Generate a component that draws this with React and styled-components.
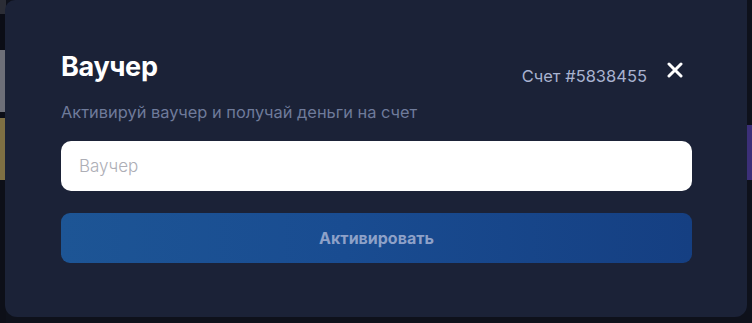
import React, { useState } from 'react';
import styled, { createGlobalStyle } from 'styled-components';

const GlobalStyle = createGlobalStyle`
  html, body {
    margin: 0;
    padding: 0;
    background-color: #0e111b;
    background-image:
      linear-gradient(to bottom, #2b2d36 0, #2b2d36 14px, #0b0d16 14px, #0b0d16 50px, #6d6f78 50px, #6d6f78 112px, #0c0e17 112px, #0c0e17 118px, #7e6f43 118px, #7e6f43 180px, #0d0f18 180px),
      linear-gradient(to bottom, #0e111b 0, #0e111b 125px, #3b2f78 125px, #3b2f78 180px, #0e111b 180px);
    background-size: 6px 100%, 6px 100%;
    background-position: left top, right top;
    background-repeat: no-repeat;
    font-family: Inter, "Noto Sans", "DejaVu Sans", sans-serif;
  }
`;

const Backdrop = styled.div`
  width: 752px;
  height: 323px;
  padding: 0 5px;
  box-sizing: border-box;
`;

const Modal = styled.div`
  height: 317px;
  box-sizing: border-box;
  padding: 51px 55px 54px 56px;
  background: #1b2237;
  border-radius: 10px 0 12px 12px;
  display: flex;
  flex-direction: column;

  & > * {
    flex-shrink: 0;
  }
`;

const Header = styled.div`
  height: 32px;
  display: flex;
  align-items: flex-start;
  justify-content: space-between;
`;

const Title = styled.h2`
  margin: 0;
  font-size: 27px;
  line-height: 32px;
  font-weight: 700;
  color: #ffffff;
  letter-spacing: -0.3px;
`;

const HeaderRight = styled.div`
  display: flex;
  align-items: flex-start;
  gap: 20px;
  margin-right: 9px;
`;

const Account = styled.span`
  margin-top: 15px;
  font-size: 16.5px;
  line-height: 20px;
  color: #a9b3d0;
`;

const CloseButton = styled.button`
  margin-top: 11px;
  width: 16px;
  height: 16px;
  padding: 0;
  border: 0;
  background: none;
  cursor: pointer;
  display: flex;
  svg { display: block; }
`;

const Subtitle = styled.p`
  margin: 19px 0 0;
  font-size: 16.4px;
  line-height: 20px;
  color: #6f7b9b;
`;

const Input = styled.input`
  margin-top: 19px;
  height: 50px;
  box-sizing: border-box;
  width: 100%;
  border: 0;
  border-radius: 10px;
  background: #ffffff;
  padding: 0 18px;
  font-family: inherit;
  font-size: 17px;
  font-weight: 300;
  color: #1b2237;
  outline: none;

  &::placeholder {
    color: #adaeb6;
  }
`;

const SubmitButton = styled.button`
  margin-top: 22px;
  height: 50px;
  width: 100%;
  border: 0;
  border-radius: 9px;
  background: linear-gradient(90deg, #1d5595 0%, #194c91 45%, #153f82 100%);
  color: #8ea1c8;
  font-family: inherit;
  font-size: 16px;
  font-weight: 700;
  cursor: pointer;
`;

export default function App() {
  const [code, setCode] = useState('');

  return (
    <>
      <GlobalStyle />
      <Backdrop>
        <Modal>
          <Header>
            <Title>Ваучер</Title>
            <HeaderRight>
              <Account>Счет #5838455</Account>
              <CloseButton aria-label="Закрыть">
                <svg width="16" height="16" viewBox="0 0 16 16">
                  <path d="M2 2L14 14M14 2L2 14" stroke="#ffffff" strokeWidth="3" strokeLinecap="round" />
                </svg>
              </CloseButton>
            </HeaderRight>
          </Header>
          <Subtitle>Активируй ваучер и получай деньги на счет</Subtitle>
          <Input placeholder="Ваучер" value={code} onChange={e => setCode(e.target.value)} />
          <SubmitButton>Активировать</SubmitButton>
        </Modal>
      </Backdrop>
    </>
  );
}
